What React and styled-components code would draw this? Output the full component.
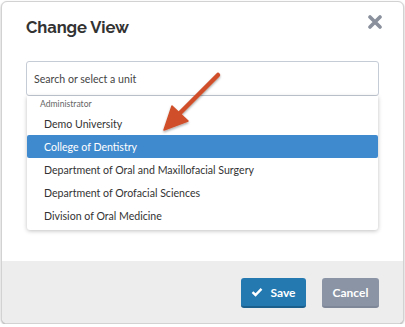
import React from "react";
import styled, { createGlobalStyle } from "styled-components";

const Global = createGlobalStyle`
  html, body { margin: 0; padding: 0; background: #fff; }
  body { font-family: Lato, "Open Sans", sans-serif; }
  * { box-sizing: border-box; }
`;

const Modal = styled.div`
  position: relative;
  margin: 1px 0 0 1px;
  width: 403px;
  height: 323px;
  border: 1px solid #d2d2d2;
  border-radius: 6px;
  box-shadow: 0 1px 2px rgba(0,0,0,0.35);
  overflow: hidden;
  display: flex;
  flex-direction: column;
  background: #fff;
`;

const Body = styled.div`
  flex: 1;
  padding: 0 24px 0 24px;
  display: flex;
  flex-direction: column;
`;

const Header = styled.div`
  display: flex;
  justify-content: space-between;
  align-items: flex-start;
  height: 59px;
  padding-top: 15px;
`;

const Title = styled.h2`
  margin: 0;
  font-family: Raleway, Montserrat, "Open Sans", sans-serif;
  font-weight: 700;
  font-size: 16.6px;
  letter-spacing: -0.1px;
  color: #333;
`;

const Close = styled.button`
  border: 0;
  background: none;
  padding: 0;
  margin: -2px -3px 0 0;
  width: 14px;
  height: 14px;
  display: flex;
`;

const Input = styled.div`
  height: 35px;
  border: 1px solid #c6ccd6;
  border-radius: 3px;
  display: flex;
  align-items: center;
  padding-left: 7px;
  font-size: 10.6px;
  color: #444;
`;

const Menu = styled.div`
  margin: 0 1px;
  background: #fff;
  box-shadow: 0 1px 4px rgba(0,0,0,0.25);
  border-radius: 0 0 3px 3px;
  padding-bottom: 3px;
`;

const GroupLabel = styled.div`
  font-size: 8.6px;
  color: #666;
  padding: 3px 0 0 13px;
  height: 16px;
`;

const Option = styled.div`
  height: 23px;
  display: flex;
  align-items: center;
  padding-left: 17px;
  font-size: 10.6px;
  border-radius: 2px;
  background: ${p => (p.$active ? "#3f8ace" : "transparent")};
  color: ${p => (p.$active ? "#fff" : "#333")};
`;

const Footer = styled.div`
  height: 62px;
  background: #ededed;
  display: flex;
  justify-content: flex-end;
  align-items: flex-start;
  gap: 16px;
  padding: 17px 24px 0 0;
`;

const Button = styled.button`
  height: 30px;
  border: 0;
  border-radius: 3px;
  font-family: Lato, sans-serif;
  font-weight: 700;
  font-size: 12px;
  color: #fff;
  display: flex;
  align-items: center;
  justify-content: center;
  gap: 7px;
  width: ${p => p.$w}px;
  background: ${p => p.$bg};
  border-bottom: 2px solid ${p => p.$edge};
  padding: 0;
`;

const Arrow = styled.svg`
  position: absolute;
  left: 150px;
  top: 60px;
  overflow: visible;
`;

const items = [
  "Demo University",
  "College of Dentistry",
  "Department of Oral and Maxillofacial Surgery",
  "Department of Orofacial Sciences",
  "Division of Oral Medicine",
];

export default function App() {
  return (
    <>
      <Global />
      <Modal>
        <Body>
          <Header>
            <Title>Change View</Title>
            <Close aria-label="close">
              <svg width="14" height="14" viewBox="0 0 14 14">
                <path d="M2 2 L12 12 M12 2 L2 12" stroke="#8a919d" strokeWidth="3.6" strokeLinecap="round" />
              </svg>
            </Close>
          </Header>
          <Input>Search or select a unit</Input>
          <Menu>
            <GroupLabel>Administrator</GroupLabel>
            {items.map((t, i) => (
              <Option key={t} $active={i === 1}>{t}</Option>
            ))}
          </Menu>
        </Body>
        <Footer>
          <Button $w={65} $bg="#2479b1" $edge="#1b5f8d">
            <svg width="12" height="10" viewBox="0 0 12 10">
              <path d="M1.5 5.2 L4.5 8 L10.5 1.8" fill="none" stroke="#fff" strokeWidth="2.4" />
            </svg>
            Save
          </Button>
          <Button $w={57} $bg="#8a94a5" $edge="#7e8798">Cancel</Button>
        </Footer>
        <Arrow width="80" height="80">
          <defs>
            <filter id="sh" x="-20%" y="-20%" width="140%" height="140%">
              <feDropShadow dx="0" dy="1.5" stdDeviation="1.2" floodColor="#000" floodOpacity="0.35" />
            </filter>
          </defs>
          <g filter="url(#sh)">
            <path d="M66 13 L24 55" stroke="#d0502a" strokeWidth="4.5" strokeLinecap="round" />
            <path d="M12 68 L20 44 L36 59 Z" fill="#d0502a" stroke="#d0502a" strokeWidth="1.5" strokeLinejoin="round" />
          </g>
        </Arrow>
      </Modal>
    </>
  );
}
